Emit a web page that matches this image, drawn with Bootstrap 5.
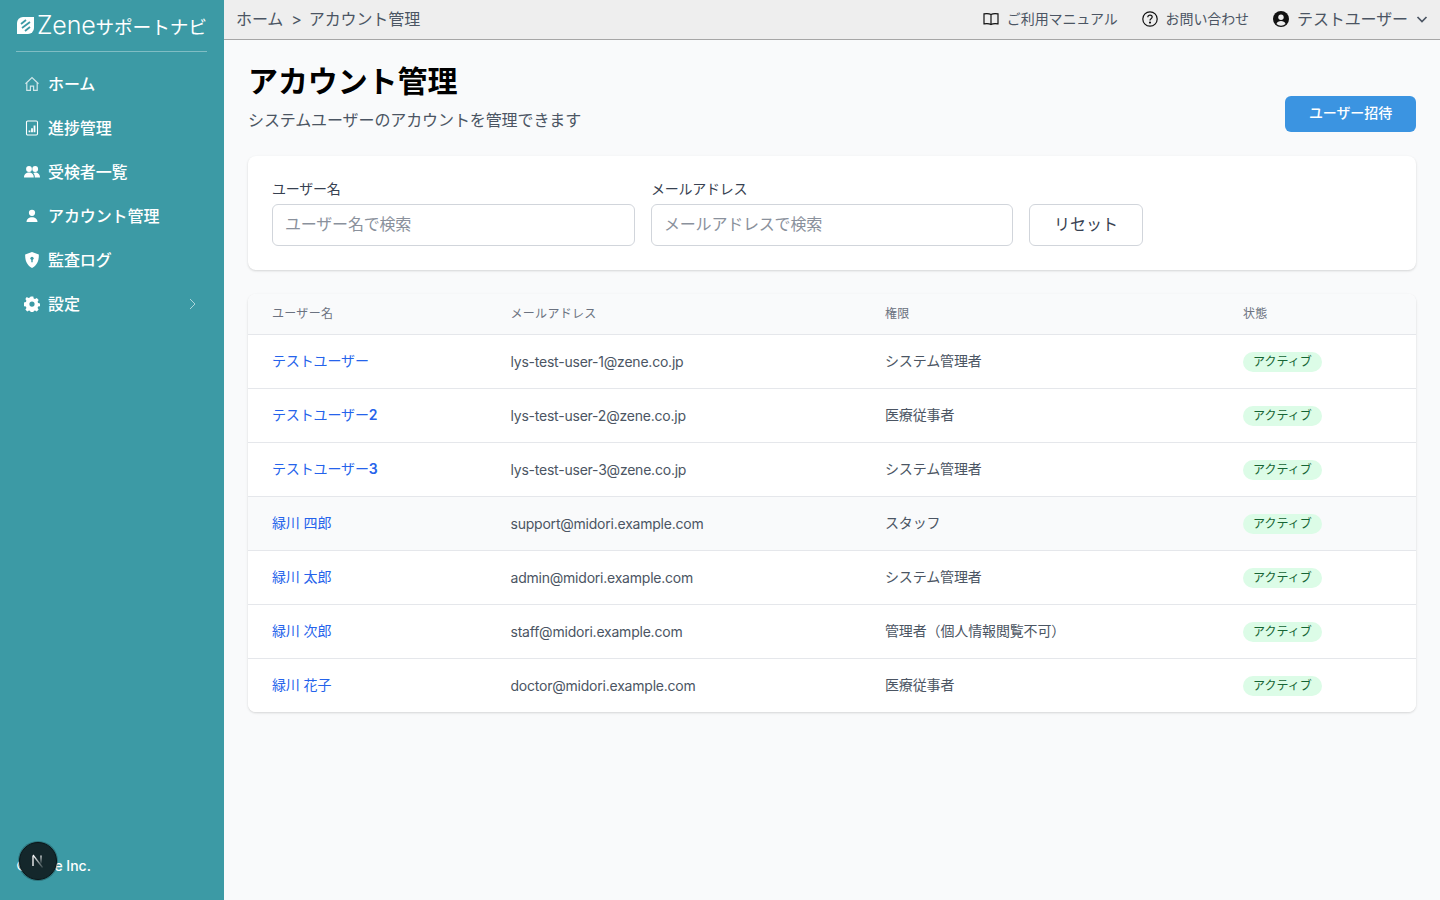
<!DOCTYPE html>
<html lang="ja">
<head>
<meta charset="utf-8">
<title>アカウント管理</title>
<link href="https://cdn.jsdelivr.net/npm/bootstrap@5.3.0/dist/css/bootstrap.min.css" rel="stylesheet">
<style>
html,body{height:100%}
body{font-family:Inter,"Noto Sans CJK JP",sans-serif;background:#f9fafb;color:#111827;overflow:hidden;letter-spacing:-.1px}
.app-shell{height:900px}
.side-bar{width:224px;flex:none;background:#3c9aa5;color:#fff;padding:0 16px}
.logo-row{height:52px;border-bottom:1px solid rgba(255,255,255,.35);gap:2px;padding-bottom:1px;margin-right:1px}
.logo-row svg{flex:none}
.logo-text{font-size:18.700px;line-height:1;white-space:nowrap;letter-spacing:-.1px}
.logo-zene{font-size:25px;font-weight:300;letter-spacing:-.2px}
.side-nav{margin-top:10px}
.side-item{height:44px;padding:0 8px;gap:8px;font-size:16px;color:#fff;text-decoration:none;font-weight:500}
.side-item svg{width:16px;height:16px;flex:none}
.side-foot{margin-top:auto;height:68px;font-size:14px;font-weight:500;position:relative;letter-spacing:0}
.side-foot span{margin-top:-2px}
.next-badge{position:absolute;left:3px;top:10px;width:38px;height:38px;border-radius:50%;background:#14272b;border:1px solid #0a1417;box-shadow:0 0 0 1px rgba(0,0,0,.25)}
.main-col{min-width:0}
.top-bar{height:40px;background:#eeeeee;border-bottom:1px solid #a6a6a6;padding:0 12px 1px;color:#4b5563}
.crumb{font-size:16px;gap:8px}
.crumb-sep{margin-right:-1px}
.top-link{font-size:14px;gap:8px;color:#4b5563;white-space:nowrap}
.top-link span{margin-top:-1px}
.top-user{font-size:16px}
.top-links{gap:24px}
.page-body{padding:23px 24px 24px}
.page-title{font-size:30px;font-weight:700;line-height:36px;color:#000;margin:0 0 9px}
.page-sub{font-size:16px;line-height:24px;color:#4b5563;margin:0}
.invite-btn{width:131px;height:36px;background:#3b94e1;border:0;border-radius:6px;color:#fff;font-size:14px;font-weight:500;padding:0 0 4px;letter-spacing:-.1px}
.filter-box{background:#fff;border-radius:8px;box-shadow:0 1px 3px rgba(0,0,0,.1),0 1px 2px rgba(0,0,0,.06);padding:24px;margin-top:24px;height:114px;gap:16px}
.filter-field{width:363px}
.filter-field.mail-field{width:362px}
.filter-label{font-size:14px;line-height:18px;color:#374151;font-weight:400;margin-bottom:6px;display:block;letter-spacing:-.25px}
.filter-input{height:42px;border:1px solid #d1d5db;border-radius:6px;font-size:16px;padding:7px 12px 9px;color:#111827;box-shadow:none;letter-spacing:-.2px}
.filter-input::placeholder{color:#8a919c}
.reset-btn{width:114px;height:42px;border:1px solid #d1d5db;border-radius:6px;background:#fff;color:#374151;font-size:16px;padding:0 0 2px}
.table-box{background:#fff;border-radius:8px;box-shadow:0 1px 3px rgba(0,0,0,.1),0 1px 2px rgba(0,0,0,.06);margin-top:24px;overflow:hidden}
.user-table{margin:0;table-layout:fixed;width:100%;border-collapse:collapse}
.user-table th{background:#f9fafb;font-size:12px;font-weight:400;color:#6b7280;height:40px;padding:0 24px;border-bottom:1px solid #e5e7eb;vertical-align:middle;letter-spacing:.3px}
.user-table td{height:54px;padding:0 24px 2px;font-size:14px;color:#4b5563;border-bottom:1px solid #e5e7eb;vertical-align:middle;background:#fff;letter-spacing:-.14px}
.user-table td.mail-cell{letter-spacing:-.22px;padding-bottom:0}
.user-table td.state-cell{padding-bottom:0}
.user-table tr:last-child td{border-bottom:0}
.user-table tr.row-hover td{background:#f9fafb}
.user-link{color:#2563eb;text-decoration:none;font-weight:400}
.link-digit{font-weight:600}
.state-pill{display:inline-block;background:#dcfce7;color:#166534;font-size:12px;line-height:19px;height:20px;padding:0 10px;border-radius:10px;font-weight:400;vertical-align:middle;letter-spacing:0}
</style>
</head>
<body>
<div class="app-shell d-flex">
  <aside class="side-bar d-flex flex-column">
    <div class="logo-row d-flex align-items-center">
      <svg width="19" height="19" viewBox="0 0 19 19"><path d="M7 1h11v11a6 6 0 0 1-6 6H1V7a6 6 0 0 1 6-6z" fill="#fff"/><path d="M5 8l5-4M6 12l8-6M9 15l5-4" stroke="#3c9aa5" stroke-width="1.800" fill="none"/></svg>
      <span class="logo-text"><span class="logo-zene">Zene</span>サポートナビ</span>
    </div>
    <nav class="side-nav d-flex flex-column">
      <a class="side-item d-flex align-items-center" href="#"><svg viewBox="0 0 16 16" fill="none" stroke="#cfe6e9" stroke-width="1.200"><path d="M1.500 7.800 8 1.600l6.500 6.200M2.800 6.800v7.600h3.600v-4.200h3.200v4.200h3.600V6.800"/></svg>ホーム</a>
      <a class="side-item d-flex align-items-center" href="#"><svg viewBox="0 0 16 16" fill="none" stroke="#fff" stroke-width="1.100"><rect x="2.500" y="1" width="11" height="14" rx="1.200"/><path d="M5.500 12.300v-1.800M8 12.300V8.200M10.500 12.300V5.500" stroke-width="1.800"/></svg>進捗管理</a>
      <a class="side-item d-flex align-items-center" href="#"><svg viewBox="0 0 16 16" fill="#fff"><circle cx="5" cy="5" r="2.900"/><circle cx="11.200" cy="5" r="2.900"/><path d="M0 13.500c0-3.200 2.300-5 5-5s4.800 1.800 4.800 5zM10.800 13.500c0-1.900-.5-3.300-1.500-4.400.6-.4 1.200-.6 2-.6 2.500 0 4.700 1.800 4.700 5z"/></svg>受検者一覧</a>
      <a class="side-item d-flex align-items-center" href="#"><svg viewBox="0 0 16 16" fill="#fff"><circle cx="8" cy="4.800" r="3.100"/><path d="M2.500 14c0-3 2.500-4.800 5.500-4.800s5.500 1.800 5.500 4.800z"/></svg>アカウント管理</a>
      <a class="side-item d-flex align-items-center" href="#"><svg viewBox="0 0 16 16"><path fill="#fff" d="M8 0 14.800 2.600c.2 6-1.600 10.600-6.800 13.400C2.800 13.200 1 8.600 1.200 2.600z"/><circle cx="8" cy="6.300" r="1.600" fill="#3c9aa5"/><path d="M7.300 7h1.400v3.200H7.300z" fill="#3c9aa5"/></svg>監査ログ</a>
      <a class="side-item d-flex align-items-center" href="#"><svg viewBox="0 0 16 16"><path fill="#fff" fill-rule="evenodd" d="M6.700.5h2.600l.4 2 1.300.6 1.800-1 1.800 1.900-1 1.700.5 1.300 2 .5v2.600l-2 .5-.5 1.300 1 1.700-1.800 1.900-1.800-1-1.300.5-.4 2H6.700l-.4-2-1.300-.5-1.800 1-1.800-1.900 1-1.700-.5-1.300-2-.5V6.500l2-.5.500-1.300-1-1.700L2.700 1.100l1.800 1 1.300-.6zM8 5.500a2.600 2.600 0 1 0 0 5.200 2.600 2.600 0 0 0 0-5.200z"/></svg>設定<svg class="ms-auto" viewBox="0 0 16 16" fill="none" stroke="#b9dde1" stroke-width=".9"><path d="m6 3 5 5-5 5"/></svg></a>
    </nav>
    <div class="side-foot d-flex align-items-center">
      <span>©Zene Inc.</span>
      <div class="next-badge d-flex align-items-center justify-content-center">
        <svg width="16" height="16" viewBox="0 0 16 16" fill="none" role="img" aria-label="Next.js"><defs><linearGradient id="fadeA" x1="0" y1="0" x2="1" y2="1"><stop offset="0" stop-color="#fff"/><stop offset="1" stop-color="#fff" stop-opacity=".15"/></linearGradient><linearGradient id="fadeB" x1="0" y1="0" x2="0" y2="1"><stop offset="0" stop-color="#fff"/><stop offset="1" stop-color="#fff" stop-opacity=".1"/></linearGradient></defs><path d="M3 13V2.500" stroke="#fff" stroke-width="1.300"/><path d="M3 2.500h.4l9.200 12" stroke="url(#fadeA)" stroke-width="1.300"/><rect x="10.400" y="2.500" width="1.200" height="8" fill="url(#fadeB)"/></svg>
      </div>
    </div>
  </aside>
  <div class="main-col flex-grow-1 d-flex flex-column">
    <header class="top-bar d-flex align-items-center justify-content-between">
      <div class="crumb d-flex align-items-center"><span>ホーム</span><span class="crumb-sep">&gt;</span><span>アカウント管理</span></div>
      <div class="top-links d-flex align-items-center">
        <div class="top-link d-flex align-items-center"><svg width="16" height="16" viewBox="0 0 16 16" fill="none" stroke="#111" stroke-width="1.200"><path d="M8 3.500C6.500 2.600 3.500 2.400 1 2.800v10c2.500-.4 5.500-.2 7 .7 1.500-.9 4.500-1.100 7-.7v-10c-2.500-.4-5.500-.2-7 .7zM8 3.500v10"/></svg><span>ご利用マニュアル</span></div>
        <div class="top-link d-flex align-items-center"><svg width="16" height="16" viewBox="0 0 16 16" fill="none" stroke="#111" stroke-width="1.200"><circle cx="8" cy="8" r="7.200"/><path d="M5.800 6.200C5.800 4.900 6.800 4.200 8 4.200s2.200.7 2.200 1.900c0 1.700-2.200 1.600-2.200 3.300"/><circle cx="8" cy="11.600" r=".5" fill="#111"/></svg><span>お問い合わせ</span></div>
        <div class="top-link top-user d-flex align-items-center"><svg width="16" height="16" viewBox="0 0 16 16"><circle cx="8" cy="8" r="8" fill="#111"/><circle cx="8" cy="6.200" r="2.700" fill="#eee"/><path d="M3.500 13c.6-2.200 2.500-3 4.500-3s3.900.8 4.500 3a6.500 6.500 0 0 1-9 0z" fill="#eee"/></svg><span>テストユーザー</span><svg width="12" height="12" viewBox="0 0 12 12" fill="none" stroke="#4b5563" stroke-width="1.700"><path d="M1.500 4 6 8.500 10.500 4"/></svg></div>
      </div>
    </header>
    <main class="page-body">
      <div class="d-flex justify-content-between align-items-end">
        <div>
          <h1 class="page-title">アカウント管理</h1>
          <p class="page-sub">システムユーザーのアカウントを管理できます</p>
        </div>
        <button class="invite-btn btn" type="button">ユーザー招待</button>
      </div>
      <form class="filter-box d-flex align-items-end">
        <div class="filter-field"><label class="filter-label">ユーザー名</label><input class="form-control filter-input" placeholder="ユーザー名で検索"></div>
        <div class="filter-field mail-field"><label class="filter-label">メールアドレス</label><input class="form-control filter-input" placeholder="メールアドレスで検索"></div>
        <button class="reset-btn btn" type="button">リセット</button>
      </form>
      <div class="table-box">
        <table class="table user-table">
          <colgroup><col style="width:238.500px"><col style="width:374.500px"><col style="width:358px"><col></colgroup>
          <thead><tr><th>ユーザー名</th><th>メールアドレス</th><th>権限</th><th>状態</th></tr></thead>
          <tbody>
            <tr><td><a class="user-link" href="#">テストユーザー</a></td><td class="mail-cell">lys-test-user-1@zene.co.jp</td><td>システム管理者</td><td class="state-cell"><span class="state-pill">アクティブ</span></td></tr>
            <tr><td><a class="user-link" href="#">テストユーザー<span class="link-digit">2</span></a></td><td class="mail-cell">lys-test-user-2@zene.co.jp</td><td>医療従事者</td><td class="state-cell"><span class="state-pill">アクティブ</span></td></tr>
            <tr><td><a class="user-link" href="#">テストユーザー<span class="link-digit">3</span></a></td><td class="mail-cell">lys-test-user-3@zene.co.jp</td><td>システム管理者</td><td class="state-cell"><span class="state-pill">アクティブ</span></td></tr>
            <tr class="row-hover"><td><a class="user-link" href="#">緑川 四郎</a></td><td class="mail-cell">support@midori.example.com</td><td>スタッフ</td><td class="state-cell"><span class="state-pill">アクティブ</span></td></tr>
            <tr><td><a class="user-link" href="#">緑川 太郎</a></td><td class="mail-cell">admin@midori.example.com</td><td>システム管理者</td><td class="state-cell"><span class="state-pill">アクティブ</span></td></tr>
            <tr><td><a class="user-link" href="#">緑川 次郎</a></td><td class="mail-cell">staff@midori.example.com</td><td>管理者（個人情報閲覧不可）</td><td class="state-cell"><span class="state-pill">アクティブ</span></td></tr>
            <tr><td><a class="user-link" href="#">緑川 花子</a></td><td class="mail-cell">doctor@midori.example.com</td><td>医療従事者</td><td class="state-cell"><span class="state-pill">アクティブ</span></td></tr>
          </tbody>
        </table>
      </div>
    </main>
  </div>
</div>
<script src="https://cdn.jsdelivr.net/npm/bootstrap@5.3.0/dist/js/bootstrap.bundle.min.js"></script>
</body>
</html>
